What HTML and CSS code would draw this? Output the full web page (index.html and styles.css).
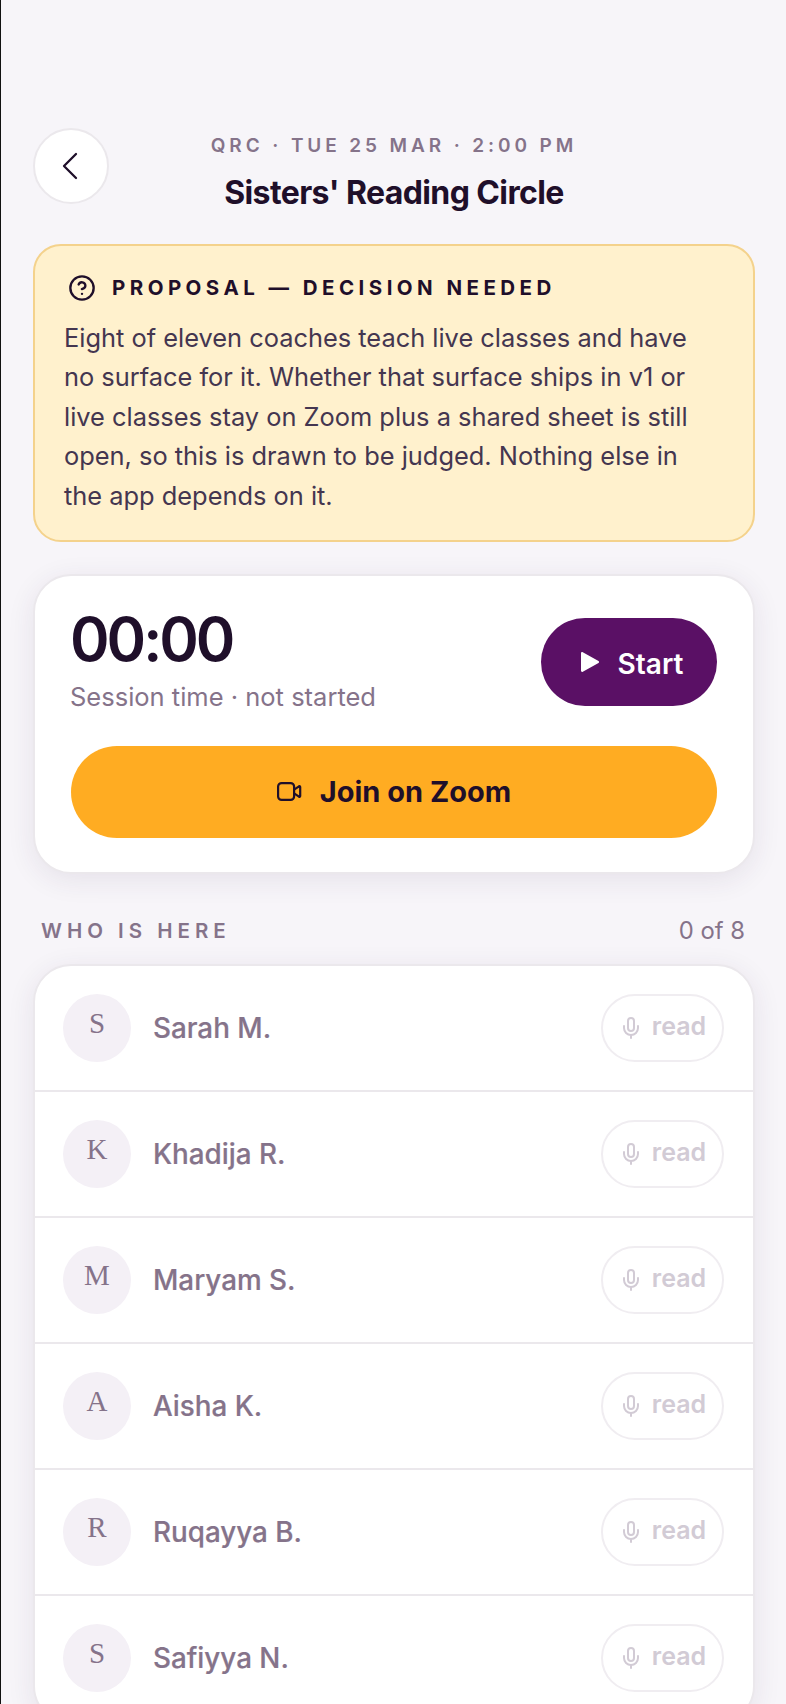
FILE: index.html
```html
<!DOCTYPE html>
<html lang="en">
<head>
<meta charset="utf-8">
<title>Sisters' Reading Circle</title>
<link rel="stylesheet" href="styles.css">
</head>
<body>
<main class="page">
  <header class="header">
    <button class="back" aria-label="Back">
      <svg viewBox="0 0 32 32" class="back-icon"><path d="M21 4 9 16l12 12"/></svg>
    </button>
    <div class="heading">
      <div class="eyebrow">QRC · TUE 25 MAR · 2:00 PM</div>
      <h1 class="title">Sisters' Reading Circle</h1>
    </div>
  </header>

  <section class="notice">
    <div class="notice-head">
      <svg viewBox="0 0 24 24" class="notice-icon"><circle cx="12" cy="12" r="10"/><path d="M9.1 9a3 3 0 0 1 5.8 1c0 2-3 3-3 3"/><path d="M12 17h.01"/></svg>
      <span>PROPOSAL — DECISION NEEDED</span>
    </div>
    <p class="notice-body">Eight of eleven coaches teach live classes and have no surface for it. Whether that surface ships in v1 or live classes stay on Zoom plus a shared sheet is still open, so this is drawn to be judged. Nothing else in the app depends on it.</p>
  </section>

  <section class="card session">
    <div class="session-top">
      <div class="timer-block">
        <div class="timer">00:00</div>
        <div class="timer-label">Session time · not started</div>
      </div>
      <button class="start">
        <svg viewBox="0 0 20 22" class="start-icon"><path d="M1 2.2c0-.9 1-1.5 1.8-1L18.5 10c.8.5.8 1.6 0 2L2.8 20.8c-.8.5-1.8-.1-1.8-1z"/></svg>
        <span>Start</span>
      </button>
    </div>
    <button class="join">
      <svg viewBox="0 0 25 19" class="join-icon"><rect x="1.1" y="1.1" width="16" height="16.8" rx="3.5"/><path d="M17.1 7.6 22 4.3c.5-.3 1.2 0 1.2.6v9.2c0 .6-.7.9-1.2.6l-4.9-3.3"/></svg>
      <span>Join on Zoom</span>
    </button>
  </section>

  <div class="section-head">
    <span class="section-title">WHO IS HERE</span>
    <span class="section-count">0 of 8</span>
  </div>

  <section class="card roster">
    <div class="row"><div class="avatar">S</div><div class="name">Sarah M.</div><div class="pill"><svg viewBox="0 0 24 24" class="mic"><rect x="9" y="2" width="6" height="13" rx="3"/><path d="M19 10v2a7 7 0 0 1-14 0v-2"/><path d="M12 19v3"/></svg><span>read</span></div></div>
    <div class="row"><div class="avatar">K</div><div class="name">Khadija R.</div><div class="pill"><svg viewBox="0 0 24 24" class="mic"><rect x="9" y="2" width="6" height="13" rx="3"/><path d="M19 10v2a7 7 0 0 1-14 0v-2"/><path d="M12 19v3"/></svg><span>read</span></div></div>
    <div class="row"><div class="avatar">M</div><div class="name">Maryam S.</div><div class="pill"><svg viewBox="0 0 24 24" class="mic"><rect x="9" y="2" width="6" height="13" rx="3"/><path d="M19 10v2a7 7 0 0 1-14 0v-2"/><path d="M12 19v3"/></svg><span>read</span></div></div>
    <div class="row"><div class="avatar">A</div><div class="name">Aisha K.</div><div class="pill"><svg viewBox="0 0 24 24" class="mic"><rect x="9" y="2" width="6" height="13" rx="3"/><path d="M19 10v2a7 7 0 0 1-14 0v-2"/><path d="M12 19v3"/></svg><span>read</span></div></div>
    <div class="row"><div class="avatar">R</div><div class="name">Ruqayya B.</div><div class="pill"><svg viewBox="0 0 24 24" class="mic"><rect x="9" y="2" width="6" height="13" rx="3"/><path d="M19 10v2a7 7 0 0 1-14 0v-2"/><path d="M12 19v3"/></svg><span>read</span></div></div>
    <div class="row"><div class="avatar">S</div><div class="name">Safiyya N.</div><div class="pill"><svg viewBox="0 0 24 24" class="mic"><rect x="9" y="2" width="6" height="13" rx="3"/><path d="M19 10v2a7 7 0 0 1-14 0v-2"/><path d="M12 19v3"/></svg><span>read</span></div></div>
  </section>
</main>
</body>
</html>
```
FILE: styles.css
```css
* { box-sizing: border-box; }
html, body { margin: 0; height: 1704px; overflow: hidden; }
body {
  background: #f7f5f9;
  border-left: 1px solid #111;
  font-family: Inter, "Liberation Sans", sans-serif;
  color: #1f0f2a;
}
.page { padding: 128px 31px 0 32px; }
button { font-family: inherit; border: 0; padding: 0; }

.header { display: flex; height: 76px; position: relative; justify-content: center; }
.back {
  position: absolute; left: 0; top: 0;
  width: 76px; height: 76px; border-radius: 50%;
  background: #fff; border: 2px solid #ebe8ec;
  display: flex; align-items: center; justify-content: center;
}
.back-icon { width: 32px; height: 32px; fill: none; stroke: #1f0f2a; stroke-width: 2.3; stroke-linecap: round; stroke-linejoin: round; }
.heading { text-align: center; }
.eyebrow { font-size: 19px; font-weight: 600; letter-spacing: 3.9px; color: #85738a; line-height: 22px; margin-top: 7px; }
.title { font-size: 32px; font-weight: 700; letter-spacing: -0.6px; line-height: 36px; margin: 18px 0 0; color: #1f0f2a; }

.notice {
  margin-top: 40px; height: 298px;
  background: #fff1cd; border: 2px solid #f4d28c; border-radius: 28px;
  padding: 28px 28px 28px 29px;
}
.notice-head { display: flex; align-items: center; gap: 16px; padding-left: 4px; font-size: 20.5px; font-weight: 700; letter-spacing: 4.45px; line-height: 28px; }
.notice-icon { width: 28px; height: 28px; fill: none; stroke: #1f0f2a; stroke-width: 2; stroke-linecap: round; stroke-linejoin: round; flex: none; }
.notice-body { margin: 16px 0 0; max-width: 648px; font-size: 25.4px; line-height: 39.4px; color: #443650; }

.card { background: #fff; border: 2px solid #ebe8ec; box-shadow: 0 6px 28px rgba(60, 30, 80, 0.09); border-radius: 38px; }
.session { margin-top: 32px; height: 300px; padding: 36px 36px; }
.session-top { display: flex; justify-content: space-between; align-items: flex-start; height: 134px; }
.timer-block { margin-left: -1px; }
.timer { font-size: 60px; font-weight: 600; line-height: 54px; letter-spacing: -3px; color: #1f0f2a; }
.timer-label { font-size: 25.5px; line-height: 30px; color: #85738a; margin-top: 16px; }
.start {
  width: 176px; height: 88px; border-radius: 44px; margin-top: 6px; padding-left: 5px;
  background: #5a1065; color: #fff; font-size: 28px; font-weight: 600;
  display: flex; align-items: center; justify-content: center; gap: 18px;
}
.start span { position: relative; top: 2px; }
.start-icon { width: 20px; height: 22px; fill: #fff; }
.join {
  width: 100%; height: 92px; border-radius: 46px; padding-bottom: 2px;
  background: #ffac22; color: #1f0f2a; font-size: 29px; font-weight: 700;
  display: flex; align-items: center; justify-content: center; gap: 18px;
}
.join-icon { width: 25px; height: 19px; fill: none; stroke: #1f0f2a; stroke-width: 2.2; stroke-linecap: round; stroke-linejoin: round; }

.section-head { display: flex; justify-content: space-between; align-items: center; margin-top: 41px; padding: 0 10px 0 8px; height: 30px; }
.section-title { font-size: 20.5px; font-weight: 600; letter-spacing: 5px; color: #85738a; }
.section-count { font-size: 23.8px; color: #85738a; }

.roster { margin-top: 19px; overflow: hidden; }
.row { display: flex; align-items: center; height: 126px; padding: 0 29px 0 28px; border-bottom: 2px solid #ebe8ec; }
.avatar {
  width: 68px; height: 68px; border-radius: 50%; background: #f4f0f6; flex: none;
  display: flex; align-items: center; justify-content: center;
  font-family: "Liberation Serif", serif; font-size: 29px; color: #85738a; padding-bottom: 10px;
}
.name { margin-left: 22px; flex: 1; font-size: 27.8px; font-weight: 500; color: #85738a; -webkit-text-stroke: 0.2px #85738a; }
.pill {
  width: 123px; height: 68px; border-radius: 34px; border: 2px solid #f0edf1;
  display: flex; align-items: center; justify-content: center; gap: 9px;
  color: #d2cbd5; font-size: 25px; font-weight: 600; padding-bottom: 4px;
}
.mic { width: 24px; height: 24px; fill: none; stroke: #d2cbd5; stroke-width: 2; stroke-linecap: round; stroke-linejoin: round; margin-top: 4px; }
```
